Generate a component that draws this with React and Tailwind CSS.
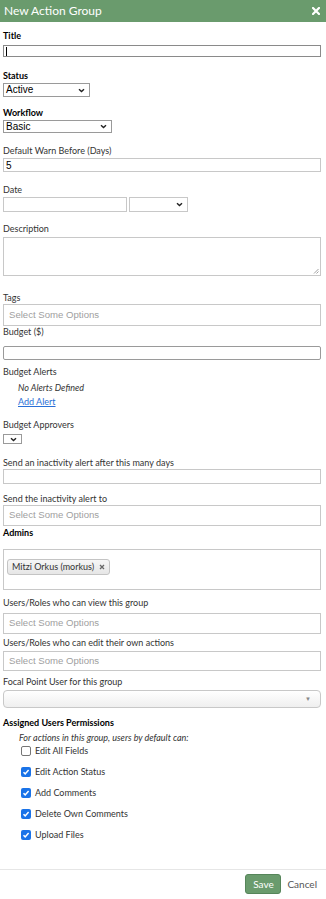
import React from 'react';

const label = "block text-[9px] leading-[12px] text-[#333]";
const boldLabel = "block text-[9px] leading-[12px] font-bold text-black";
const box = "border border-[#c8c8c8] bg-white";

function Chevron() {
  return (
    <svg width="7" height="5" viewBox="0 0 7 5" className="shrink-0">
      <path d="M1 1.2 L3.5 3.6 L6 1.2" fill="none" stroke="#222" strokeWidth="1.4" />
    </svg>
  );
}

function Select({ value, className }) {
  return (
    <div className={`flex items-center justify-between border border-[#9a9a9a] bg-white pl-[2px] pr-[4px] text-[10px] text-black font-['Liberation_Sans',Arial,sans-serif] ${className}`}>
      <span className="leading-none">{value}</span>
      <Chevron />
    </div>
  );
}

function MultiSelect({ className }) {
  return (
    <div className={`flex items-center ${box} pl-[5px] text-[9.6px] text-[#a0a0a0] font-['Liberation_Sans',Arial,sans-serif] ${className}`}>
      Select Some Options
    </div>
  );
}

function Check({ checked, text, className }) {
  return (
    <div className={`flex items-center h-[12px] ${className}`}>
      {checked ? (
        <span className="w-[10px] h-[10px] rounded-[2px] bg-[#1a73e8] flex items-center justify-center">
          <svg width="8" height="8" viewBox="0 0 8 8">
            <path d="M1.5 4.2 L3.2 5.9 L6.6 2" fill="none" stroke="#fff" strokeWidth="1.5" />
          </svg>
        </span>
      ) : (
        <span className="w-[10px] h-[10px] rounded-[2px] border border-[#767676] bg-white" />
      )}
      <span className="ml-[4px] text-[9px] text-[#333]">{text}</span>
    </div>
  );
}

export default function App() {
  return (
    <div className="w-[326px] h-[899px] bg-white font-['Lato','Open_Sans',sans-serif] overflow-hidden">
      {/* Header */}
      <div className="h-[22px] bg-[#6a9b6d] flex items-center justify-between pl-[4px] pr-[6px]">
        <span className="text-white text-[12px] leading-none">New Action Group</span>
        <svg width="8" height="8" viewBox="0 0 8 8">
          <path d="M1 1 L7 7 M7 1 L1 7" stroke="#fff" strokeWidth="2.2" strokeLinecap="square" />
        </svg>
      </div>

      <div className="pl-[3px] pr-[5px]">
        <label className={`${boldLabel} mt-[8px]`}>Title</label>
        <div className="mt-[3px] h-[12px] border border-[#8a8a8a] bg-white flex items-center pl-[2px]">
          <span className="w-[1px] h-[9px] bg-black" />
        </div>

        <label className={`${boldLabel} mt-[13px]`}>Status</label>
        <Select value="Active" className="mt-[1px] h-[14px] w-[87px]" />

        <label className={`${boldLabel} mt-[10px]`}>Workflow</label>
        <Select value="Basic" className="mt-[1px] h-[13px] w-[109px]" />

        <label className={`${label} mt-[12px]`}>Default Warn Before (Days)</label>
        <div className={`mt-[1px] h-[14px] ${box} flex items-center pl-[2px] text-[10px] text-black font-['Liberation_Sans',Arial,sans-serif]`}>5</div>

        <label className={`${label} mt-[12px]`}>Date</label>
        <div className="mt-[1px] flex gap-[2px]">
          <div className={`h-[15px] w-[124px] ${box}`} />
          <Select value="" className="h-[15px] w-[59px] border-[#c8c8c8]" />
        </div>

        <label className={`${label} mt-[11px]`}>Description</label>
        <div className={`mt-[2px] h-[39px] ${box} relative`}>
          <svg width="6" height="6" viewBox="0 0 6 6" className="absolute right-[1px] bottom-[1px]">
            <path d="M1 5.5 L5.5 1 M3.5 5.5 L5.5 3.5" stroke="#888" strokeWidth="0.8" />
          </svg>
        </div>

        <label className={`${label} mt-[16px]`}>Tags</label>
        <MultiSelect className="h-[22px]" />

        <label className={`${label} mt-[0px]`}>Budget ($)</label>
        <div className={`mt-[8px] h-[14px] border border-[#9a9a9a] bg-white rounded-[2px]`} />

        <label className={`${label} mt-[6px]`}>Budget Alerts</label>
        <div className="mt-[4px] pl-[15px] text-[9px] leading-[12px] italic text-[#333]">No Alerts Defined</div>
        <div className="mt-[2px] pl-[15px] text-[9px] leading-[12px] text-[#2a6fd6] underline">Add Alert</div>

        <label className={`${label} mt-[11px]`}>Budget Approvers</label>
        <Select value="" className="mt-[3px] h-[10px] w-[19px]" />

        <label className={`${label} mt-[13px]`}>Send an inactivity alert after this many days</label>
        <div className={`h-[15px] ${box}`} />

        <label className={`${label} mt-[9px]`}>Send the inactivity alert to</label>
        <MultiSelect className="h-[21px]" />

        <label className={`${boldLabel} mt-[1px]`}>Admins</label>
        <div className={`mt-[10px] h-[41px] ${box} pt-[2px] pl-[3px]`}>
          <span className="inline-flex items-center h-[16px] px-[4px] rounded-[3px] border border-[#c4c4c4] bg-gradient-to-b from-[#f6f6f6] to-[#e6e6e6] text-[9px] text-[#333]">
            Mitzi Orkus (morkus)
            <svg width="6" height="6" viewBox="0 0 6 6" className="ml-[5px]">
              <path d="M1 1 L5 5 M5 1 L1 5" stroke="#666" strokeWidth="1.3" />
            </svg>
          </span>
        </div>

        <label className={`${label} mt-[7px]`}>Users/Roles who can view this group</label>
        <MultiSelect className="mt-[4px] h-[21px]" />

        <label className={`${label} mt-[3px]`}>Users/Roles who can edit their own actions</label>
        <MultiSelect className="mt-[2px] h-[20px]" />

        <label className={`${label} mt-[5px]`}>Focal Point User for this group</label>
        <div className="mt-[2px] h-[18px] rounded-[4px] border border-[#c8c8c8] bg-gradient-to-b from-white to-[#efefef] flex items-center justify-end pr-[9px]">
          <span className="text-[6px] text-[#888] leading-none">▼</span>
        </div>

        <label className={`${boldLabel} mt-[9px]`}>Assigned Users Permissions</label>
        <div className="mt-[3px] pl-[16px] text-[9px] leading-[12px] italic text-[#333]">For actions in this group, users by default can:</div>

        <div className="mt-[1px] pl-[18px] flex flex-col gap-[9px]">
          <Check text="Edit All Fields" />
          <Check checked text="Edit Action Status" />
          <Check checked text="Add Comments" />
          <Check checked text="Delete Own Comments" />
          <Check checked text="Upload Files" />
        </div>
      </div>

      {/* Footer */}
      <div className="mt-[28px] border-t border-[#e6e6e6] flex items-center justify-end pt-[4px] pr-[9px] gap-[6px]">
        <button className="h-[20px] w-[36px] rounded-[3px] border border-[#56855a] bg-[#6a9b6d] text-white text-[10px]">Save</button>
        <span className="text-[10px] text-[#555]">Cancel</span>
      </div>
    </div>
  );
}
